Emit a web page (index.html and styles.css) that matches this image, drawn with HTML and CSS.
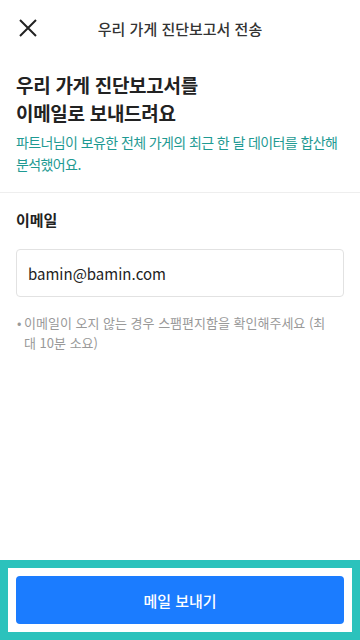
FILE: index.html
```html
<!DOCTYPE html>
<html lang="ko">
<head>
  <meta charset="UTF-8" />
  <meta name="viewport" content="width=device-width, initial-scale=1.0"/>
  <title>우리 가게 진단보고서 전송</title>
  <link rel="stylesheet" href="styles.css">
</head>
<body>

  <div class="page">
    <!-- 상단 헤더 -->
    <header class="top-bar">
      <button class="close-btn" aria-label="닫기">
        <svg width="24" height="24" viewBox="0 0 24 24">
          <path d="M4 4 L20 20 M20 4 L4 20" stroke="#222" stroke-width="2" fill="none"/>
        </svg>
      </button>
      <h1 class="top-title">우리 가게 진단보고서 전송</h1>
    </header>

    <main class="content">
      <section class="intro">
        <h2>우리 가게 진단보고서를<br>이메일로 보내드려요</h2>
        <p>파트너님이 보유한 전체 가게의 최근 한 달 데이터를 합산해 분석했어요.</p>
      </section>

      <section class="form">
        <label class="label" for="email">이메일</label>
        <input class="email-input" id="email" type="email" value="bamin@bamin.com">
        <div class="note">
          <span class="dot">•</span>
          <span>이메일이 오지 않는 경우 스팸편지함을 확인해주세요 (최대 10분 소요)</span>
        </div>
      </section>
    </main>

    <!-- 하단 버튼 -->
    <footer class="bottom">
      <button class="send-btn">메일 보내기</button>
    </footer>
  </div>

</body>
</html>
```

FILE: styles.css
```css
* {
  box-sizing: border-box;
}

html, body {
  margin: 0;
  padding: 0;
}

body {
  font-family: "Noto Sans CJK KR", "Noto Sans", sans-serif;
  background: #fff;
  color: #222;
}

.page {
  height: 640px;
  display: flex;
  flex-direction: column;
}

.top-bar {
  height: 56px;
  display: flex;
  align-items: center;
  justify-content: center;
  position: relative;
}

.close-btn {
  position: absolute;
  left: 16px;
  top: 16px;
  width: 24px;
  height: 24px;
  padding: 0;
  border: none;
  background: none;
}

.close-btn svg {
  display: block;
}

.top-title {
  margin: 0;
  font-size: 15px;
  font-weight: 500;
  color: #333;
}

.content {
  flex: 1;
}

.intro {
  padding: 15px 16px 17px;
  border-bottom: 1px solid #eee;
}

.intro h2 {
  margin: 0;
  font-size: 19px;
  line-height: 28px;
  letter-spacing: -0.3px;
  font-weight: 700;
  color: #222;
}

.intro p {
  margin: 4px 0 0;
  font-size: 14px;
  line-height: 22px;
  letter-spacing: -0.6px;
  color: #1e9a93;
}

.form {
  padding: 16px 16px 0;
  display: flex;
  flex-direction: column;
}

.label {
  font-size: 15px;
  line-height: 22px;
  font-weight: 700;
  color: #222;
}

.email-input {
  margin-top: 18px;
  height: 48px;
  padding: 0 11px;
  border: 1px solid #e2e2e2;
  border-radius: 4px;
  font-family: inherit;
  font-size: 15px;
  color: #222;
}

.note {
  margin-top: 16px;
  display: flex;
  gap: 2px;
  font-size: 13px;
  line-height: 20px;
  color: #999;
  padding-right: 8px;
}

.note .dot {
  flex: none;
  width: 6px;
  padding-left: 1px;
}

.bottom {
  height: 80px;
  border: 8px solid #2bc2bc;
  padding: 8px;
  background: #fff;
}

.send-btn {
  width: 100%;
  height: 48px;
  border: none;
  border-radius: 4px;
  background: #1b7cff;
  color: #fff;
  font-family: inherit;
  font-size: 15px;
  font-weight: 500;
}
```
